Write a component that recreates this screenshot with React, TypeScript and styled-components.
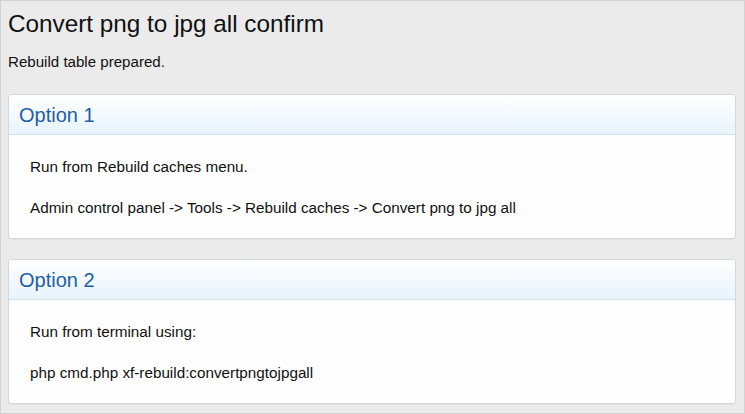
import React from "react";
import styled, { createGlobalStyle } from "styled-components";

const Global = createGlobalStyle`
  html, body { margin: 0; padding: 0; background: #ebebeb; }
  * { box-sizing: border-box; }
`;

const Frame = styled.div`
  width: 745px;
  height: 414px;
  border: 1px solid #d2d2d2;
  background: #ebebeb;
  padding: 9px 8px 0 7px;
  font-family: "Liberation Sans", Arial, sans-serif;
  color: #111111;
  display: flex;
  flex-direction: column;
  overflow: hidden;
`;

const Title = styled.h1`
  margin: 0;
  font-size: 24.3px;
  font-weight: 400;
  line-height: 28.8px;
`;

const Notice = styled.p`
  margin: 12px 0 0;
  font-size: 15.1px;
  line-height: 21px;
`;

const Panels = styled.div`
  margin-top: 22px;
  display: flex;
  flex-direction: column;
  gap: 20px;
`;

const Panel = styled.section`
  background: #fefefe;
  border: 1px solid #d7d7d7;
  border-radius: 3px;
  box-shadow: 0 1px 1px rgba(0, 0, 0, 0.04);
  overflow: hidden;
`;

const PanelHeader = styled.h2`
  margin: 0;
  padding: 8px 10px 7px;
  font-size: 20px;
  font-weight: 400;
  line-height: 24px;
  color: #1c60a6;
  background: linear-gradient(to bottom, #ffffff 0%, #e8f3fc 100%);
  border-bottom: 1px solid #d5e1eb;
`;

const PanelBody = styled.div`
  padding: 21px 20px 20px 21px;
  display: flex;
  flex-direction: column;
  gap: 20px;
`;

const Line = styled.p`
  margin: 0;
  font-size: 15.25px;
  line-height: 21px;
`;

const options = [
  {
    title: "Option 1",
    lines: [
      "Run from Rebuild caches menu.",
      "Admin control panel -> Tools -> Rebuild caches -> Convert png to jpg all",
    ],
  },
  {
    title: "Option 2",
    lines: ["Run from terminal using:", "php cmd.php xf-rebuild:convertpngtojpgall"],
  },
];

export default function App() {
  return (
    <>
      <Global />
      <Frame>
        <Title>Convert png to jpg all confirm</Title>
        <Notice>Rebuild table prepared.</Notice>
        <Panels>
          {options.map((o) => (
            <Panel key={o.title}>
              <PanelHeader>{o.title}</PanelHeader>
              <PanelBody>
                {o.lines.map((l) => (
                  <Line key={l}>{l}</Line>
                ))}
              </PanelBody>
            </Panel>
          ))}
        </Panels>
      </Frame>
    </>
  );
}
